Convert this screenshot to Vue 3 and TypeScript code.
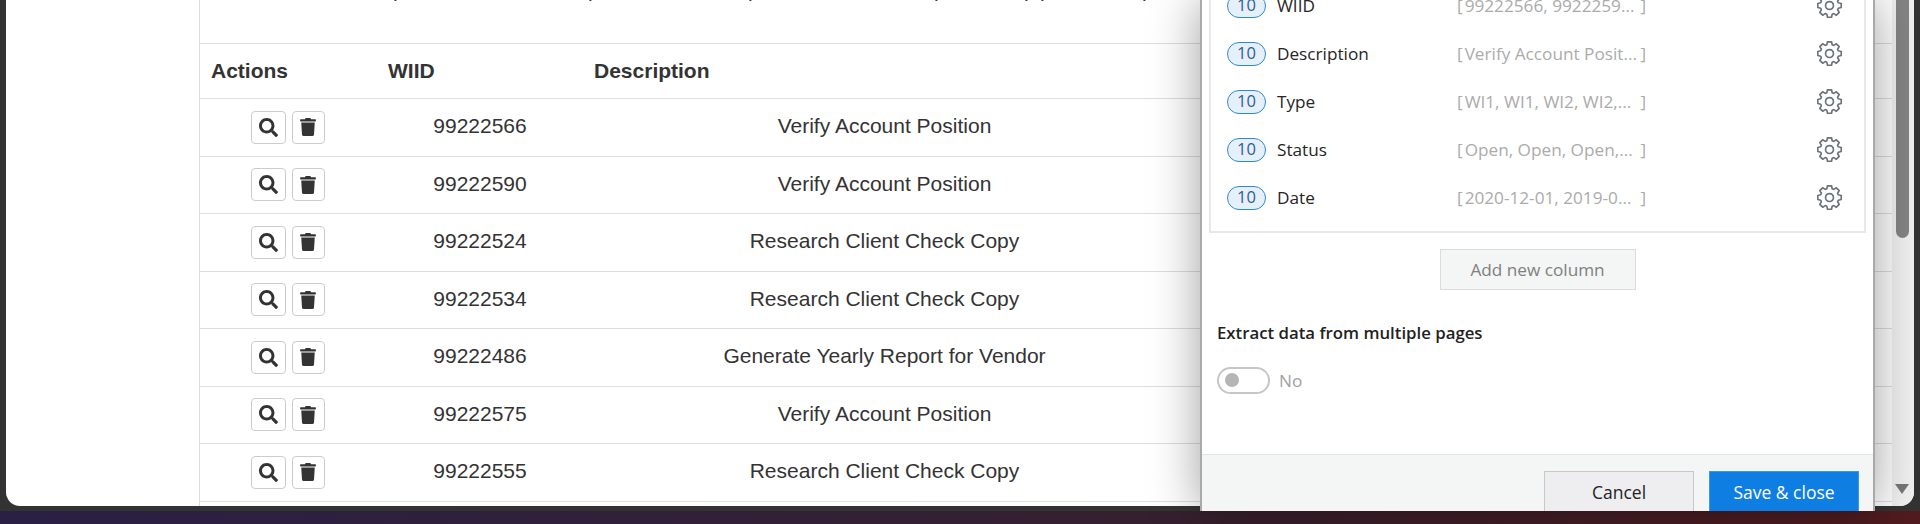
<script setup lang="ts">
// Work-item table behind a "table extraction" side panel, scrolled part way.
interface Row {
  id: string;
  desc: string;
}

const rows: Row[] = [
  { id: "99222566", desc: "Verify Account Position" },
  { id: "99222590", desc: "Verify Account Position" },
  { id: "99222524", desc: "Research Client Check Copy" },
  { id: "99222534", desc: "Research Client Check Copy" },
  { id: "99222486", desc: "Generate Yearly Report for Vendor" },
  { id: "99222575", desc: "Verify Account Position" },
  { id: "99222555", desc: "Research Client Check Copy" },
];

const columns = [
  { name: "WIID", value: "99222566, 9922259..." },
  { name: "Description", value: "Verify Account Posit..." },
  { name: "Type", value: "WI1, WI1, WI2, WI2,..." },
  { name: "Status", value: "Open, Open, Open,..." },
  { name: "Date", value: "2020-12-01, 2019-0..." },
];

// descenders of the paragraph scrolled off the top edge
const descenders = [193, 388, 548, 734, 824, 840, 942];

// 8-tooth cog outline, one tooth pointing straight up
function gearPath(): string {
  const parts: string[] = [];
  const teeth = 8;
  const rOut = 11.4;
  const rIn = 8.8;
  for (let i = 0; i < teeth; i++) {
    const a = (i / teeth) * Math.PI * 2 - Math.PI / 2;
    const pts: [number, number][] = [
      [rIn, a - 0.3],
      [rOut, a - 0.17],
      [rOut, a + 0.17],
      [rIn, a + 0.3],
    ];
    for (const [r, t] of pts) {
      const x = 12 + r * Math.cos(t);
      const y = 12 + r * Math.sin(t);
      parts.push(`${parts.length ? "L" : "M"}${x.toFixed(2)} ${y.toFixed(2)}`);
    }
  }
  return parts.join(" ") + " Z";
}
const gear = gearPath();
</script>

<template>
  <div class="desktop">
    <div class="frame">
      <div class="page">
        <main class="content">
          <div class="clipped">
            <span
              v-for="x in descenders"
              :key="x"
              class="clipped-ch"
              :style="{ left: `${x}px` }"
              >p</span
            >
          </div>
          <div class="table">
            <div class="thead">
              <div class="th">Actions</div>
              <div class="th">WIID</div>
              <div class="th">Description</div>
            </div>
            <div v-for="r in rows" :key="r.id" class="tr">
              <div class="actions">
                <button class="icon-btn search" type="button" aria-label="View">
                  <svg width="19" height="19" viewBox="0 0 512 512">
                    <path
                      fill="#333"
                      d="M505 442.7L405.3 343c-4.5-4.5-10.6-7-17-7H372c27.6-35.3 44-79.7 44-128C416 93.1 322.9 0 208 0S0 93.1 0 208s93.1 208 208 208c48.3 0 92.7-16.4 128-44v16.3c0 6.4 2.5 12.5 7 17l99.7 99.7c9.4 9.4 24.6 9.4 33.9 0l28.3-28.3c9.4-9.4 9.4-24.6.1-34zM208 336c-70.7 0-128-57.2-128-128 0-70.7 57.2-128 128-128 70.7 0 128 57.2 128 128 0 70.7-57.2 128-128 128z"
                    />
                  </svg>
                </button>
                <button class="icon-btn trash" type="button" aria-label="Delete">
                  <svg width="16" height="18" viewBox="0 0 448 512">
                    <path
                      fill="#333"
                      d="M432 32H312l-9.4-18.7A24 24 0 0 0 281.1 0H166.8a23.72 23.72 0 0 0-21.4 13.3L136 32H16A16 16 0 0 0 0 48v32a16 16 0 0 0 16 16h416a16 16 0 0 0 16-16V48a16 16 0 0 0-16-16zM53.2 467a48 48 0 0 0 47.9 45h245.8a48 48 0 0 0 47.9-45L416 128H32z"
                    />
                  </svg>
                </button>
              </div>
              <div class="td">{{ r.id }}</div>
              <div class="td">{{ r.desc }}</div>
            </div>
          </div>
        </main>
        <div class="scrollbar">
          <div class="thumb" />
          <div class="arrow" />
        </div>
      </div>
    </div>

    <aside class="panel">
      <div class="panel-body">
        <div class="col-card">
          <div v-for="c in columns" :key="c.name" class="col-row">
            <span class="pill">10</span>
            <span class="col-name">{{ c.name }}</span>
            <span class="col-value">
              <span>[</span>
              <span class="col-text">{{ c.value }}</span>
              <span>]</span>
            </span>
            <svg class="gear" width="25" height="25" viewBox="0 0 24 24" fill="none">
              <path :d="gear" stroke="#68737d" stroke-width="1.6" stroke-linejoin="round" />
              <circle cx="12" cy="12" r="3.8" stroke="#68737d" stroke-width="1.6" />
            </svg>
          </div>
        </div>
        <button class="add-btn" type="button">Add new column</button>
        <h3 class="section-title">Extract data from multiple pages</h3>
        <div class="toggle-row">
          <span class="toggle"><span class="knob" /></span>
          <span class="toggle-label">No</span>
        </div>
      </div>
      <footer class="panel-footer">
        <button class="btn cancel" type="button">Cancel</button>
        <button class="btn save" type="button">Save &amp; close</button>
      </footer>
    </aside>
  </div>
</template>

<style>
html,
body {
  margin: 0;
  overflow: hidden;
}
</style>

<style scoped>
.desktop {
  position: relative;
  width: 1920px;
  height: 524px;
  overflow: hidden;
  background: linear-gradient(90deg, #2a1f45 0%, #35202f 60%, #511b1f 100%);
  font-family: "Open Sans", "Liberation Sans", sans-serif;
}
.frame {
  height: 511px;
  box-sizing: border-box;
  padding: 0 6px 5px;
  background: #333;
}
.page {
  display: flex;
  height: 100%;
  background: #fff;
  border-radius: 0 0 14px 14px;
  overflow: hidden;
}
.content {
  flex: 1;
  min-width: 0;
  margin-left: 193px;
  border-left: 1px solid #ddd;
  font-family: "Liberation Sans", Arial, sans-serif;
  color: #333;
}
.clipped {
  position: relative;
  height: 43px;
  overflow: hidden;
}
.clipped-ch {
  position: absolute;
  top: -22px;
  font-size: 21px;
  line-height: 24px;
}
.table {
  border-top: 1px solid #ddd;
}
.thead,
.tr {
  display: grid;
  grid-template-columns: 177px 206px 603px 1fr;
  align-items: center;
  border-bottom: 1px solid #ddd;
  box-sizing: border-box;
}
.thead {
  height: 55px;
}
.tr {
  height: 57.5px;
}
.th {
  padding-left: 11px;
  font-size: 21px;
  font-weight: 700;
}
.td {
  font-size: 21px;
  text-align: center;
  margin-top: -2px;
}
.actions {
  display: flex;
  justify-content: center;
  gap: 6px;
  padding-right: 2px;
}
.icon-btn {
  display: flex;
  align-items: center;
  justify-content: center;
  height: 33px;
  padding: 0;
  background: #fff;
  border: 1px solid #ccc;
  border-radius: 4px;
}
.search {
  width: 35px;
}
.trash {
  width: 33px;
}
.scrollbar {
  position: relative;
  width: 22px;
  background: #f1f1f1;
}
.thumb {
  width: 13px;
  height: 238px;
  margin-left: 4px;
  background: #858585;
  border-radius: 0 0 7px 7px;
}
.arrow {
  position: absolute;
  left: 3px;
  bottom: 12px;
  width: 0;
  height: 0;
  border-left: 7.5px solid transparent;
  border-right: 7.5px solid transparent;
  border-top: 10px solid #777;
}
.panel {
  position: absolute;
  top: 0;
  left: 1200px;
  display: flex;
  flex-direction: column;
  width: 675px;
  height: 511px;
  box-sizing: border-box;
  background: #fff;
  border-left: 2px solid #a9a9a9;
  border-right: 2px solid #a9a9a9;
  box-shadow: 0 0 46px rgba(0, 0, 0, 0.38);
  overflow: hidden;
}
.panel-body {
  flex: 1;
  min-height: 0;
  padding: 0 7px 0 7px;
}
.col-card {
  box-sizing: border-box;
  margin-top: -20px;
  padding: 13px 22px 22px 16px;
  border: 2px solid #e8e8e8;
  border-top: 0;
}
.col-row {
  display: grid;
  grid-template-columns: 39px 191px 189px 1fr 25px;
  align-items: center;
  height: 24px;
  margin-bottom: 24px;
}
.col-row:last-child {
  margin-bottom: 0;
}
.pill {
  box-sizing: border-box;
  height: 24px;
  border: 1.5px solid #2b88d8;
  border-radius: 12px;
  background: #e6f0fb;
  color: #2a5f94;
  font-size: 16.5px;
  line-height: 20px;
  text-align: center;
}
.col-name {
  padding-left: 11px;
  font-size: 17.2px;
  color: #252525;
}
.col-value {
  display: flex;
  justify-content: space-between;
  font-size: 17.2px;
  color: #ababab;
}
.col-text {
  flex: 1;
  padding-left: 2px;
  white-space: nowrap;
}
.gear {
  grid-column: 5;
  display: block;
}
.add-btn {
  display: block;
  box-sizing: border-box;
  width: 196px;
  height: 41px;
  margin: 16px auto 0;
  padding: 0;
  background: #f4f5f5;
  border: 1px solid #dcdcdc;
  font: 400 17.2px "Open Sans", sans-serif;
  color: #808080;
}
.section-title {
  margin: 31px 0 0 8px;
  font-size: 16.8px;
  line-height: 24px;
  font-weight: 600;
  color: #1f1f1f;
}
.toggle-row {
  display: flex;
  align-items: center;
  gap: 9px;
  margin: 22px 0 0 8px;
}
.toggle {
  display: flex;
  align-items: center;
  box-sizing: border-box;
  width: 53px;
  height: 27px;
  padding-left: 6px;
  border: 2px solid #c6c6c6;
  border-radius: 14px;
}
.knob {
  width: 14px;
  height: 14px;
  margin-top: -1px;
  border-radius: 50%;
  background: #b5b5b5;
}
.toggle-label {
  font-size: 17.2px;
  color: #a0a0a0;
}
.panel-footer {
  display: flex;
  justify-content: flex-end;
  gap: 15px;
  box-sizing: border-box;
  height: 57px;
  padding: 16px 14px 0 0;
  background: #f4f5f5;
  border-top: 1px solid #e3e5e5;
}
.btn {
  box-sizing: border-box;
  width: 150px;
  height: 48px;
  padding: 0 0 7px;
  font: 400 17.5px "Open Sans", sans-serif;
}
.cancel {
  background: #eeeef0;
  border: 1px solid #c8c8c8;
  color: #222;
}
.save {
  background: #0f7ee3;
  border: 1px solid #3a96f0;
  color: #fff;
}
</style>
